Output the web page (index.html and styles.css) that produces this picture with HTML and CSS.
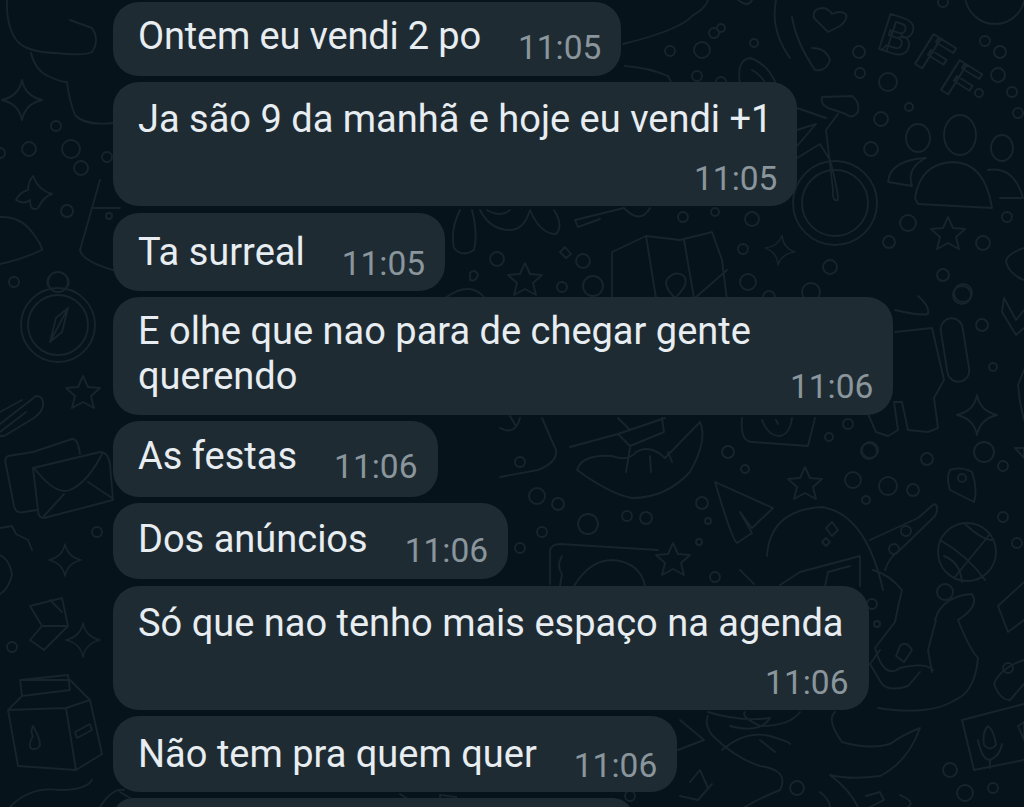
FILE: index.html
```html
<!DOCTYPE html>
<html lang="pt-BR">
  <head>
    <meta charset="UTF-8" />
    <meta name="viewport" content="width=device-width, initial-scale=1" />
    <title>Conversa</title>
    <link rel="stylesheet" href="styles.css">
  </head>
  <body>
    <div class="chat">
      <!-- doodle wallpaper -->
      <svg class="wallpaper" viewBox="0 0 1024 807" aria-hidden="true">
        <defs>
          <path id="star5" d="M0-17 5-6 17-5 8 3 11 15 0 9-11 15-8 3-17-5-5-6Z" />
          <path id="star4" d="M0-20Q3-4 20 0 3 4 0 20-3 4-20 0-3-4 0-20Z" />
        </defs>
        <g class="doodles">
          <!-- top left -->
          <path d="M7 0Q6 28 18 42 28 52 55 53 85 56 92 52 100 40 92 28L70 20M31 53Q35 70 48 76 60 82 67 82 69 100 75 115 85 126 113 123" />
          <use href="#star4" x="22" y="100" />
          <path d="M33 176Q38 190 52 194 44 196 38 208 30 212 30 200 24 205 16 200 20 192 28 190 28 182 33 176Z" />
          <path d="M0 217Q20 216 32 232 42 245 42 250 20 260 0 264" />
          <path d="M100 180 80 250Q82 262 120 272M92 208H120" />
          <circle cx="56" cy="126" r="5" /><circle cx="29" cy="149" r="7" /><circle cx="71" cy="149" r="9" />
          <circle cx="81" cy="168" r="7" /><circle cx="107" cy="157" r="5" /><circle cx="67" cy="211" r="6" />
          <circle cx="0" cy="153" r="5" /><circle cx="109" cy="216" r="3" />

          <!-- compass, clip, envelopes -->
          <circle cx="58" cy="325" r="37" /><circle cx="58" cy="325" r="30" /><circle cx="58" cy="282" r="10" />
          <path d="M48 286Q46 280 50 276M68 286Q70 280 66 276M68 308 50 342 56 318ZM68 308 62 332 50 342" />
          <circle cx="14" cy="282" r="5" />
          <use href="#star5" x="83" y="393" />
          <path d="M0 424 36 396Q44 396 43 406 42 412 34 418L4 436H0M0 412 22 400M0 432 26 412" />
          <path d="M33 452 8 456Q4 458 6 465L14 506Q16 514 24 512L37 510M33 452 72 439Q78 438 80 454" />
          <path d="M33 468 100 452Q108 452 110 464L113 500 44 518Q38 518 38 510ZM34 468Q56 496 70 490 88 482 102 454M44 516 64 494M88 482 112 498" />
          <circle cx="97" cy="532" r="5" />
          <path d="M0 528 12 526 16 534 28 540 32 550" />
          <use href="#star4" transform="translate(65 560) scale(.8)" />
          <path d="M0 555Q10 560 12 575 8 590 0 594" />

          <!-- lower left -->
          <path d="M30 606 62 598 68 626 44 650 30 640 42 626ZM42 626 67 626M50 600 62 612" />
          <circle cx="12" cy="647" r="5" />
          <use href="#star4" transform="translate(83 640) scale(.85)" />
          <path d="M20 680 22 696 8 710 18 766 76 770 102 754 90 700 70 680ZM20 680 68 675 70 690 22 696M8 710 66 708 90 700M66 708 76 770M33 736Q27 746 32 749 38 750 40 745 40 738 33 726 30 732 33 736ZM75 732 90 724 92 730 77 738Z" />
          <path d="M10 807Q30 786 60 790 86 790 92 780M100 807Q112 788 124 790" />

          <!-- top middle, between the bubbles -->
          <path d="M623 44Q680 30 692 16 706 8 708 0" />
          <path d="M625 66Q650 68 668 76L672 84M738 0Q748 8 752 0" />
          <circle cx="670" cy="51" r="5" /><circle cx="702" cy="50" r="8" /><circle cx="714" cy="33" r="5" />
          <circle cx="697" cy="76" r="5" /><circle cx="721" cy="28" r="4" /><circle cx="721" cy="82" r="5" />
          <circle cx="754" cy="43" r="4" />
          <path d="M740 84Q736 60 750 58 768 64 776 84M752 70Q760 74 766 84" />
          <path d="M776 0Q770 30 790 58M792 17Q796 42 815 70 826 72 830 60 826 48 812 48" />
          <path d="M828 32 814 18Q812 8 824 8 830 10 832 14 840 10 846 14 848 20 840 26Z" />

          <!-- top right -->
          <text class="letter" transform="translate(876 48) rotate(18)">B</text>
          <text class="letter" transform="translate(912 62) rotate(32) scale(1.1 .95)">F</text>
          <text class="letter" transform="translate(938 88) rotate(32) scale(1.1 .95)">F</text>
          <circle cx="859" cy="52" r="6" /><circle cx="860" cy="73" r="5" /><circle cx="888" cy="82" r="9" />
          <circle cx="985" cy="41" r="5" /><circle cx="1000" cy="52" r="6" /><circle cx="998" cy="75" r="7" />
          <circle cx="979" cy="93" r="4" /><circle cx="1012" cy="92" r="5" /><circle cx="1018" cy="113" r="5" />
          <circle cx="909" cy="107" r="4" /><circle cx="881" cy="119" r="7" /><circle cx="871" cy="149" r="7" />
          <circle cx="943" cy="2" r="5" /><circle cx="995" cy="-6" r="30" />
          <circle cx="908" cy="223" r="8" /><circle cx="889" cy="242" r="6" /><circle cx="983" cy="243" r="7" />
          <circle cx="1007" cy="217" r="5" /><circle cx="943" cy="275" r="6" /><circle cx="963" cy="293" r="9" />
          <circle cx="830" cy="267" r="7" /><circle cx="811" cy="292" r="9" />

          <!-- bike and group -->
          <circle cx="835" cy="203" r="42" /><circle cx="835" cy="203" r="33" />
          <path d="M822 97 852 96Q860 102 858 112 852 120 846 114L828 108Q820 104 822 97ZM838 114 826 130 833 190Q832 202 838 200 838 190 830 160L820 144 797 158M797 108 826 118M797 130 816 124 797 146" />
          <ellipse cx="918" cy="138" rx="12" ry="14" /><ellipse cx="960" cy="135" rx="16" ry="20" /><ellipse cx="1002" cy="148" rx="11" ry="13" />
          <path d="M915 198Q920 164 952 162 985 162 992 208L918 204ZM888 182Q890 160 926 158 906 168 912 186ZM988 170Q1014 166 1023 198L1000 198" />
          <use href="#star5" x="948" y="234" />
          <path d="M1024 248Q1006 254 1006 262 1010 275 1024 280" />
          <use href="#star4" transform="translate(780 250) rotate(8) scale(.75)" />
          <path d="M780 312 770 300" />

          <!-- below bubble 2 -->
          <path d="M460 210Q450 230 454 248 462 258 474 250 478 234 472 210M480 210Q490 230 510 230 524 230 530 210M530 210Q540 234 556 234 564 226 554 210M487 210Q500 218 510 210" />
          <path d="M575 220 624 208Q640 225 650 208M575 220 578 227 600 219" />
          <circle cx="497" cy="259" r="7" /><path d="M565 247 571 254 566 258 560 252Z" /><circle cx="583" cy="261" r="7" />
          <circle cx="562" cy="287" r="5" /><circle cx="593" cy="286" r="10" /><circle cx="683" cy="217" r="5" />
          <circle cx="715" cy="212" r="4" /><circle cx="752" cy="219" r="7" /><circle cx="743" cy="249" r="5" />
          <circle cx="748" cy="282" r="8" /><circle cx="769" cy="297" r="6" />
          <use href="#star5" x="525" y="280" />
          <path d="M470 273Q475 268 478 275 476 282 470 280ZM445 298Q470 280 485 298" />
          <path d="M612 300 612 252 646 236 680 240 712 232 722 260 727 300M646 236 656 298M684 240 694 298M695 298 727 270" />
          <path d="M675 298Q662 285 668 278 676 270 684 276 690 284 675 298" />

          <!-- right of bubble 4 -->
          <path d="M895 310Q920 316 928 314 930 306 918 296M895 332 932 328 944 380 934 398 938 428 928 432 908 430 902 402 894 402 898 430 888 436 876 432 868 414" />
          <rect x="944" y="318" width="22" height="64" rx="11" transform="rotate(-9 955 350)" />
          <use href="#star4" x="977" y="415" />
          <circle cx="982" cy="325" r="6" /><circle cx="993" cy="367" r="4" /><circle cx="962" cy="295" r="9" />
          <path d="M1004 298 1016 320 1024 310M1004 298 1002 312 1016 335 1024 328M1024 370 1018 385 1020 402 1024 420" />
          <circle cx="870" cy="450" r="8" /><circle cx="927" cy="459" r="6" /><circle cx="984" cy="452" r="10" />
          <circle cx="1003" cy="466" r="5" /><circle cx="888" cy="486" r="9" /><circle cx="913" cy="490" r="6" />
          <circle cx="866" cy="500" r="4" /><circle cx="1003" cy="517" r="5" /><circle cx="1017" cy="543" r="5" />
          <path d="M950 470Q960 466 972 472 978 490 974 502L950 490Q946 478 950 470Z" /><circle cx="962" cy="478" r="4" />
          <path d="M1015 448H1024V458Z" />

          <!-- middle band -->
          <path d="M500 477 538 470Q558 462 556 450L542 418M500 428Q515 436 520 418M516 426 510 416" />
          <circle cx="520" cy="462" r="5" />
          <path d="M577 470Q582 454 612 456 628 462 636 452 650 444 665 458L700 422Q708 440 690 472 666 498 632 498 610 494 577 470ZM570 447 618 434 665 418M618 434 630 446 664 432 662 418M630 448 626 472M650 456 651 472M668 452 672 462M618 418 630 430" />
          <path d="M742 418Q740 442 752 442L808 446 815 418M762 420Q768 436 780 436 790 434 792 418M776 420 778 424" />
          <circle cx="728" cy="452" r="6" /><circle cx="745" cy="469" r="4" /><circle cx="829" cy="437" r="4" />
          <circle cx="848" cy="424" r="5" /><circle cx="869" cy="451" r="8" />
          <use href="#star5" x="805" y="484" />
          <circle cx="537" cy="496" r="8" /><circle cx="558" cy="504" r="6" /><circle cx="588" cy="524" r="10" />
          <circle cx="627" cy="516" r="5" /><circle cx="646" cy="518" r="6" /><circle cx="542" cy="532" r="5" />
          <circle cx="520" cy="548" r="5" /><circle cx="702" cy="503" r="6" /><circle cx="708" cy="521" r="3" />
          <circle cx="699" cy="542" r="3" /><circle cx="715" cy="577" r="5" /><circle cx="853" cy="480" r="8" />
          <path d="M715 482 773 508 752 528 740 512 752 533 737 543Q732 540 715 482Z" />
          <path d="M767 556Q770 510 822 507 866 514 883 590M826 528 832 522 838 530 832 536ZM826 538 830 542 826 546 822 542Z" />
          <path d="M870 540 918 518 934 504Q940 506 935 516L900 550Q890 556 885 570" />
          <circle cx="906" cy="531" r="5" /><circle cx="894" cy="549" r="5" />
          <circle cx="967" cy="552" r="29" />
          <path d="M940 540Q968 556 985 580M964 523Q982 540 992 540M954 578 990 534M944 556Q960 562 962 582" />
          <path d="M550 584V550Q552 544 560 544L658 550M574 586Q590 560 612 560 640 562 645 586M562 556Q556 566 562 574L560 586" />
          <use href="#star5" x="673" y="560" />
          <path d="M740 570 754 584M780 585 800 572 860 556 860 586M825 586 828 572 850 566" />

          <!-- lower right -->
          <path d="M873 570Q890 575 902 590 898 606 895 622 884 636 875 648 884 680 900 668 925 662 933 670M900 646Q906 640 912 650L904 662 896 656ZM935 620Q942 596 972 594 980 606 958 620 970 650 978 658 975 692 955 700 930 716 878 708M936 620 928 650 932 672" />
          <path d="M880 650 870 664 882 684Q890 692 908 686L920 672" />
          <circle cx="945" cy="592" r="8" /><circle cx="872" cy="604" r="5" /><circle cx="877" cy="624" r="3" />
          <path d="M1024 582 998 606 1008 632 1024 620" />
          <path d="M1024 660Q1000 668 994 684 1000 700 1010 700L1024 684" /><circle cx="1008" cy="668" r="5" />
          <path d="M1024 704 962 720 974 770 1024 760" />
          <path d="M988 726Q982 732 984 745 990 752 996 745 994 730 988 726ZM978 740Q982 760 990 760 1000 756 1002 744M990 760V768M1018 726 1024 722V740Z" />
          <circle cx="950" cy="770" r="7" /><circle cx="965" cy="793" r="8" /><circle cx="993" cy="788" r="5" />
          <circle cx="797" cy="788" r="7" />
          <path d="M680 720 704 740 678 750M708 712Q740 722 770 718 760 734 730 726M745 712Q740 716 760 726 790 726 800 712" />
          <path d="M708 716Q704 724 712 735 735 758 760 766 790 770 780 790 760 798 745 807M722 750Q745 730 770 736 790 742 790 744M760 740 775 752" />
          <path d="M835 712Q826 720 842 742 870 750 890 744 904 734 920 728 908 762 880 776 850 780 830 775 850 790 858 807" />
          <path d="M690 782 700 770 708 788M680 796 698 800 712 784" />
          <path d="M820 792Q830 800 830 807M866 796 880 792 884 800 870 807M900 795Q916 802 908 807" />
          <path d="M120 792 130 798M400 794 420 807M440 795 456 797 456 807 440 807Z" />
          <circle cx="630" cy="796" r="5" /><circle cx="604" cy="804" r="5" />
        </g>
      </svg>

      <div class="thread">
        <div class="bubble short">
          <span class="msg">Ontem eu vendi 2 po</span>
          <span class="time">11:05</span>
        </div>
        <div class="bubble stacked">
          <span class="msg">Ja são 9 da manhã e hoje eu vendi +1</span>
          <span class="time">11:05</span>
        </div>
        <div class="bubble tall">
          <span class="msg">Ta surreal</span>
          <span class="time">11:05</span>
        </div>
        <div class="bubble wrapped">
          <span class="msg">E olhe que nao para de chegar gente<br />querendo</span>
          <span class="time">11:06</span>
        </div>
        <div class="bubble raised">
          <span class="msg">As festas</span>
          <span class="time">11:06</span>
        </div>
        <div class="bubble">
          <span class="msg">Dos anúncios</span>
          <span class="time">11:06</span>
        </div>
        <div class="bubble stacked">
          <span class="msg">Só que nao tenho mais espaço na agenda</span>
          <span class="time">11:06</span>
        </div>
        <div class="bubble lowered">
          <span class="msg">Não tem pra quem quer</span>
          <span class="time">11:06</span>
        </div>
        <div class="bubble last"></div>
      </div>
    </div>
  </body>
</html>
```

FILE: styles.css
```css
* {
  box-sizing: border-box;
}
html,
body {
  margin: 0;
  padding: 0;
  height: 100%;
  background: #06131b;
  overflow: hidden;
}
.chat {
  position: relative;
  width: 1024px;
  height: 807px;
  overflow: hidden;
  font-family: Roboto, "Liberation Sans", sans-serif;
}
.wallpaper {
  position: absolute;
  top: 0;
  left: 0;
  width: 1024px;
  height: 807px;
  filter: blur(0.5px);
}
.doodles {
  fill: none;
  stroke: #17242c;
  stroke-width: 1.9;
  stroke-linejoin: round;
  stroke-linecap: round;
}
.letter {
  font-family: Roboto, sans-serif;
  font-size: 52px;
  font-weight: 700;
  fill: none;
  stroke: #17242c;
  stroke-width: 1.9;
}
.thread {
  position: relative;
  display: flex;
  flex-direction: column;
  align-items: flex-start;
  gap: 6.3px;
  padding: 2px 0 0 113px;
}
.bubble {
  display: flex;
  gap: 37px;
  padding: 14px 20px 6px 25px;
  background: #1f2b33;
  border-radius: 26px;
}
.msg {
  color: #e7edf0;
  font-size: 38px;
  line-height: 44px;
  white-space: nowrap;
}
.time {
  margin-top: 12px;
  color: #8a969c;
  font-size: 33.5px;
  line-height: 44px;
  white-space: nowrap;
}
.short {
  padding-top: 12px;
  padding-bottom: 6px;
}
.short .msg {
  letter-spacing: -0.17px;
}
.raised {
  padding-top: 13px;
  padding-bottom: 8px;
}
.raised .time {
  margin-top: 11px;
}
.lowered {
  padding-top: 16px;
  padding-bottom: 4px;
}
.tall {
  padding-top: 17px;
  padding-bottom: 5px;
}
.stacked {
  flex-direction: column;
  align-items: flex-end;
  gap: 0;
  padding: 15px 25px 5px 25px;
}
.stacked .msg {
  align-self: flex-start;
}
.stacked .time {
  margin-top: 16px;
  margin-right: -5px;
}
.wrapped {
  gap: 39px;
  padding-top: 12px;
  padding-bottom: 16px;
}
.wrapped .msg {
  line-height: 45px;
}
.wrapped .time {
  align-self: flex-end;
  margin-bottom: -10px;
}
.last {
  width: 520px;
  height: 40px;
}
```
